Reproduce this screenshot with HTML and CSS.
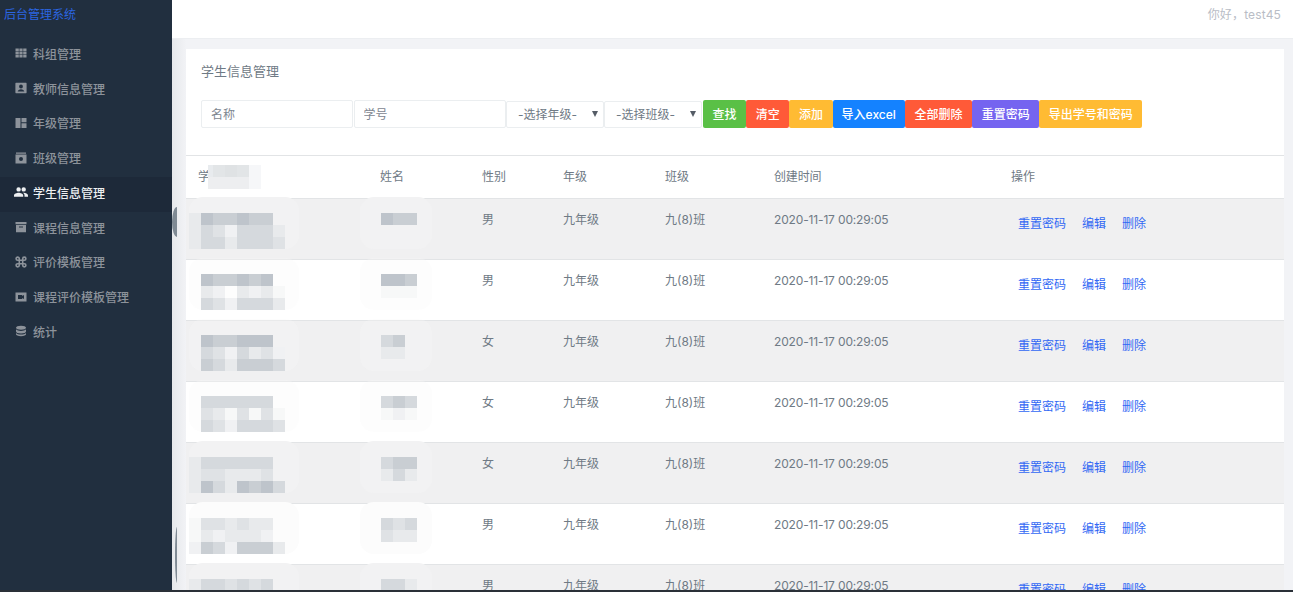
FILE: index.html
```html
<!DOCTYPE html>
<html lang="zh-CN">
<head>
<meta charset="utf-8">
<title>学生信息管理</title>
<link rel="stylesheet" href="styles.css">
</head>
<body>
<div class="app">
  <aside class="side">
    <div class="logo">后台管理系统</div>
    <nav class="nav">
      <a class="item"><svg viewBox="0 0 12 12"><path d="M.5 1.500h3.300v2.700H.5zM4.400 1.500h3.200v2.700H4.400zM8.200 1.500h3.300v2.700H8.200zM.5 4.700h3.300v2.600H.5zM4.400 4.700h3.200v2.600H4.400zM8.200 4.700h3.300v2.600H8.200zM.5 7.800h3.300v2.700H.5zM4.400 7.800h3.200v2.700H4.400zM8.200 7.800h3.300v2.700H8.200z"/></svg>科组管理</a>
      <a class="item"><svg viewBox="0 0 12 12"><path fill-rule="evenodd" d="M1 .8h10a.6.6 0 0 1 .6.6v9.2a.6.6 0 0 1-.6.6H1a.6.6 0 0 1-.6-.6V1.400a.6.6 0 0 1 .6-.6zM6 2.600a1.900 1.900 0 1 0 0 3.800 1.900 1.900 0 0 0 0-3.800zM2.700 9.600h6.600c0-1.500-1.800-2.400-3.300-2.400s-3.300.9-3.300 2.400z"/></svg>教师信息管理</a>
      <a class="item"><svg viewBox="0 0 12 12"><path d="M.5 1h5v10h-5zM6.500 1h5v4.200h-5zM6.500 6.200h5V11h-5z"/></svg>年级管理</a>
      <a class="item"><svg viewBox="0 0 12 12"><path fill-rule="evenodd" d="M1 .5h10v1.200H1zM.5 2.500h11v9H.5zM6 5a2 2 0 1 0 0 4 2 2 0 0 0 0-4z"/></svg>班级管理</a>
      <a class="item active"><svg viewBox="0 0 14 12"><path d="M4.600 5.600a2.200 2.200 0 1 0 0-4.400 2.200 2.200 0 0 0 0 4.400zM9.700 5.600a2.200 2.200 0 1 0 0-4.400 2.200 2.200 0 0 0 0 4.400zM4.600 6.800C2.800 6.800 0 7.700 0 9.400v1.300h9.200V9.400c0-1.700-2.800-2.600-4.600-2.600zM9.700 6.800h-.8c1 .7 1.600 1.500 1.600 2.600v1.300H14V9.400c0-1.700-2.500-2.600-4.300-2.600z"/></svg>学生信息管理</a>
      <a class="item"><svg viewBox="0 0 12 12"><path d="M.5 1h11v2.200H.5zM1 4h10v7.300H1zM4 5.500v1h4v-1z" fill-rule="evenodd"/></svg>课程信息管理</a>
      <a class="item"><svg viewBox="0 0 12 12"><path fill="none" stroke="currentColor" stroke-width="1.600" d="M4.300 4.300h3.400v3.400H4.300zM4.300 4.300H2.700a1.600 1.600 0 1 1 1.600-1.600zM7.700 4.300V2.700a1.600 1.600 0 1 1 1.600 1.600zM7.700 7.700h1.600a1.600 1.600 0 1 1-1.600 1.600zM4.300 7.700v1.600a1.600 1.600 0 1 1-1.600-1.600z"/></svg>评价模板管理</a>
      <a class="item"><svg viewBox="0 0 12 12"><path fill-rule="evenodd" d="M.5 1.500h11v9H.5zM3 4v4h4.200V6.900L9 8V4L7.200 5.100V4z"/></svg>课程评价模板管理</a>
      <a class="item"><svg viewBox="0 0 12 12"><path d="M6 .8c3 0 5 .9 5 2s-2 2-5 2-5-.9-5-2 2-2 5-2zM1 4.300c.9 1 3 1.600 5 1.600s4.100-.6 5-1.600v2.200c0 1.100-2 2-5 2s-5-.9-5-2zM1 8c.9 1 3 1.500 5 1.500S10.100 9 11 8v1.300c0 1.100-2 1.900-5 1.900s-5-.8-5-1.900z"/></svg>统计</a>
    </nav>
  </aside>
  <div class="main">
    <header class="top">你好，test45</header>
    <section class="panel">
      <h1 class="title">学生信息管理</h1>
      <div class="bar">
        <input class="field" placeholder="名称">
        <input class="field" placeholder="学号">
        <div class="sel">-选择年级-</div>
        <div class="sel">-选择班级-</div>
        <button class="btn green">查找</button>
        <button class="btn red">清空</button>
        <button class="btn amber">添加</button>
        <button class="btn blue">导入excel</button>
        <button class="btn red">全部删除</button>
        <button class="btn violet">重置密码</button>
        <button class="btn amber">导出学号和密码</button>
      </div>
      <div class="table">
        <div class="row head">
          <div class="c1">学<span class="headblob"><i class="h1"></i><i class="h2"></i><i class="h3"></i><i class="h2"></i><i class="h5"></i><i class="h4"></i><i class="h4"></i><i class="h4"></i><i class="h4"></i><i class="h5"></i></span></div><div class="c2">姓名</div><div class="c3">性别</div><div class="c4">年级</div><div class="c5">班级</div><div class="c6">创建时间</div><div class="c7">操作</div>
        </div>

        <div class="row alt clean">
          <div class="c1"><div class="mosaic"><i class="g5"></i><i class="g1"></i><i class="g2"></i><i class="g2"></i><i class="g1"></i><i class="g2"></i><i class="g2"></i><i class="g0"></i><i class="g5"></i><i class="g3"></i><i class="g4"></i><i class="g6"></i><i class="g3"></i><i class="g3"></i><i class="g3"></i><i class="g5"></i><i class="g5"></i><i class="g3"></i><i class="g3"></i><i class="g5"></i><i class="g3"></i><i class="g3"></i><i class="g3"></i><i class="g4"></i></div></div>
          <div class="c2"><div class="mosaic short"><i class="g1"></i><i class="g2"></i><i class="g2"></i><i class="g0"></i><i class="g0"></i><i class="g0"></i></div></div>
          <div class="c3">男</div><div class="c4">九年级</div><div class="c5">九(8)班</div><div class="c6">2020-11-17 00:29:05</div>
          <div class="c7"><a>重置密码</a><a>编辑</a><a>删除</a></div>
        </div>

        <div class="row">
          <div class="c1"><div class="mosaic"><i class="g0"></i><i class="g1"></i><i class="g2"></i><i class="g2"></i><i class="g1"></i><i class="g2"></i><i class="g1"></i><i class="g0"></i><i class="g0"></i><i class="g5"></i><i class="g6"></i><i class="g0"></i><i class="g5"></i><i class="g6"></i><i class="g5"></i><i class="g7"></i><i class="g0"></i><i class="g3"></i><i class="g4"></i><i class="g6"></i><i class="g3"></i><i class="g3"></i><i class="g3"></i><i class="g5"></i></div></div>
          <div class="c2"><div class="mosaic short"><i class="g1"></i><i class="g1"></i><i class="g2"></i><i class="g7"></i><i class="g7"></i><i class="g7"></i></div></div>
          <div class="c3">男</div><div class="c4">九年级</div><div class="c5">九(8)班</div><div class="c6">2020-11-17 00:29:05</div>
          <div class="c7"><a>重置密码</a><a>编辑</a><a>删除</a></div>
        </div>

        <div class="row alt">
          <div class="c1"><div class="mosaic"><i class="g0"></i><i class="g1"></i><i class="g2"></i><i class="g2"></i><i class="g1"></i><i class="g1"></i><i class="g1"></i><i class="g0"></i><i class="g0"></i><i class="g3"></i><i class="g4"></i><i class="g6"></i><i class="g3"></i><i class="g5"></i><i class="g4"></i><i class="g6"></i><i class="g0"></i><i class="g2"></i><i class="g3"></i><i class="g5"></i><i class="g2"></i><i class="g2"></i><i class="g2"></i><i class="g3"></i></div></div>
          <div class="c2"><div class="mosaic short"><i class="g3"></i><i class="g2"></i><i class="g0"></i><i class="g5"></i><i class="g5"></i><i class="g0"></i></div></div>
          <div class="c3">女</div><div class="c4">九年级</div><div class="c5">九(8)班</div><div class="c6">2020-11-17 00:29:05</div>
          <div class="c7"><a>重置密码</a><a>编辑</a><a>删除</a></div>
        </div>

        <div class="row">
          <div class="c1"><div class="mosaic"><i class="g0"></i><i class="g3"></i><i class="g3"></i><i class="g3"></i><i class="g3"></i><i class="g3"></i><i class="g3"></i><i class="g0"></i><i class="g0"></i><i class="g4"></i><i class="g5"></i><i class="g7"></i><i class="g4"></i><i class="g7"></i><i class="g4"></i><i class="g7"></i><i class="g0"></i><i class="g3"></i><i class="g4"></i><i class="g6"></i><i class="g3"></i><i class="g3"></i><i class="g3"></i><i class="g4"></i></div></div>
          <div class="c2"><div class="mosaic short"><i class="g3"></i><i class="g2"></i><i class="g3"></i><i class="g7"></i><i class="g6"></i><i class="g7"></i></div></div>
          <div class="c3">女</div><div class="c4">九年级</div><div class="c5">九(8)班</div><div class="c6">2020-11-17 00:29:05</div>
          <div class="c7"><a>重置密码</a><a>编辑</a><a>删除</a></div>
        </div>

        <div class="row alt clean">
          <div class="c1"><div class="mosaic"><i class="g5"></i><i class="g3"></i><i class="g3"></i><i class="g3"></i><i class="g3"></i><i class="g3"></i><i class="g3"></i><i class="g0"></i><i class="g5"></i><i class="g4"></i><i class="g4"></i><i class="g5"></i><i class="g5"></i><i class="g5"></i><i class="g4"></i><i class="g0"></i><i class="g5"></i><i class="g1"></i><i class="g3"></i><i class="g5"></i><i class="g1"></i><i class="g2"></i><i class="g1"></i><i class="g3"></i></div></div>
          <div class="c2"><div class="mosaic short"><i class="g3"></i><i class="g2"></i><i class="g2"></i><i class="g5"></i><i class="g3"></i><i class="g5"></i></div></div>
          <div class="c3">女</div><div class="c4">九年级</div><div class="c5">九(8)班</div><div class="c6">2020-11-17 00:29:05</div>
          <div class="c7"><a>重置密码</a><a>编辑</a><a>删除</a></div>
        </div>

        <div class="row clean">
          <div class="c1"><div class="mosaic"><i class="g7"></i><i class="g4"></i><i class="g4"></i><i class="g5"></i><i class="g4"></i><i class="g5"></i><i class="g5"></i><i class="g0"></i><i class="g7"></i><i class="g5"></i><i class="g6"></i><i class="g5"></i><i class="g5"></i><i class="g5"></i><i class="g6"></i><i class="g0"></i><i class="g6"></i><i class="g2"></i><i class="g3"></i><i class="g6"></i><i class="g2"></i><i class="g2"></i><i class="g2"></i><i class="g5"></i></div></div>
          <div class="c2"><div class="mosaic short"><i class="g3"></i><i class="g4"></i><i class="g3"></i><i class="g4"></i><i class="g5"></i><i class="g5"></i></div></div>
          <div class="c3">男</div><div class="c4">九年级</div><div class="c5">九(8)班</div><div class="c6">2020-11-17 00:29:05</div>
          <div class="c7"><a>重置密码</a><a>编辑</a><a>删除</a></div>
        </div>

        <div class="row alt clean">
          <div class="c1"><div class="mosaic"><i class="g5"></i><i class="g3"></i><i class="g3"></i><i class="g4"></i><i class="g3"></i><i class="g4"></i><i class="g3"></i><i class="g0"></i><i class="g6"></i><i class="g5"></i><i class="g6"></i><i class="g5"></i><i class="g5"></i><i class="g5"></i><i class="g6"></i><i class="g7"></i></div></div>
          <div class="c2"><div class="mosaic short"><i class="g3"></i><i class="g3"></i><i class="g5"></i><i class="g6"></i><i class="g6"></i><i class="g6"></i></div></div>
          <div class="c3">男</div><div class="c4">九年级</div><div class="c5">九(8)班</div><div class="c6">2020-11-17 00:29:05</div>
          <div class="c7"><a>重置密码</a><a>编辑</a><a>删除</a></div>
        </div>
      </div>
    </section>
  </div>
  <span class="arc arc-a"></span>
  <span class="arc arc-b"></span>
</div>
</body>
</html>
```
FILE: styles.css
```css
* { box-sizing: border-box; }
html, body { margin: 0; height: 100%; overflow: hidden; }
body {
  font-family: Inter, "Noto Sans CJK SC", sans-serif;
  font-size: 12px;
  color: #6f7a85;
  background: #f0f2f5;
  border-bottom: 2px solid #2a3038;
}
.app { position: relative; display: flex; height: 590px; overflow: hidden; }

.side { flex: 0 0 172px; background: #212f3f; color: #8b929a; }
.logo { height: 30px; line-height: 29px; padding-left: 4px; color: #2b66e2; font-size: 12px; }
.nav { padding-top: 8px; }
.item { display: flex; align-items: center; height: 34.75px; padding: 0 0 4px 15px; gap: 6px; color: #8d939b; font-size: 12px; font-weight: 500; }
.item svg { width: 12px; height: 12px; fill: currentColor; flex: none; }
.item.active { background: #1d2939; color: #eef0f2; }
.item.active svg { width: 14px; margin-left: -1px; margin-right: -1px; }

.main { flex: 1; min-width: 0; display: flex; flex-direction: column; background: linear-gradient(90deg, #e6e8eb, #f2f3f6 14px); }
.top { height: 39px; flex: none; background: #fff; border-bottom: 1px solid #eceef1; padding: 7px 12px 0 0; text-align: right; color: #b9bdc6; font-size: 12px; line-height: 16px; letter-spacing: .15px; }
.panel { margin: 10px 9px 0 14px; flex: 1; background: #fff; overflow: hidden; }
.title { margin: 0; padding: 13px 0 0 15px; font-size: 13px; line-height: 18px; font-weight: 400; color: #6f7a85; }

.bar { display: flex; align-items: flex-start; padding: 20px 0 0 15px; height: 75px; }
.field { width: 152px; height: 28px; margin-right: .5px; padding: 0 9px; border: 1px solid #ebeef0; border-radius: 2px; font: inherit; color: #6f7a85; background: #fff; outline: 0; }
.field::placeholder { color: #7d8690; opacity: 1; }
.sel { position: relative; width: 98px; height: 27px; line-height: 25px; margin-top: 1px; padding-left: 11px; border: 1px solid #ebeef0; border-radius: 2px; color: #6f7a85; }
.sel::after { content: ""; position: absolute; right: 5px; top: 9px; border: 3.5px solid transparent; border-top: 6px solid #555c66; border-bottom: 0; }
.sel + .sel { margin-right: 1px; }
.btn { height: 28px; padding: 0 9.600px 2px; border: 0; border-radius: 2px; color: #fff; font: inherit; font-weight: 500; white-space: nowrap; }
.green { background: #5ac046; }
.red { background: #ff5a38; }
.amber { background: #ffbb33; }
.blue { background: #1482ff; padding: 0 9px 2px; }
.violet { background: #7564f0; }

.table { border-top: 1px solid #e2e4e6; }
.row { display: flex; height: 61px; padding-top: 12px; border-bottom: 1px solid #e2e4e6; line-height: 17px; position: relative; }
.row.head { height: 43px; background: #fff; }
.row.alt { background: #f0f0f1; }
.c1 { width: 194px; padding-left: 12px; position: relative; }
.c2 { width: 102px; position: relative; }
.c3 { width: 81px; }
.c4 { width: 102px; }
.c5 { width: 109px; }
.c6 { width: 237px; letter-spacing: -.15px; }
.row:not(.head) .c7 { padding: 4px 0 0 7px; display: flex; gap: 16px; color: #3268f4; }

.row:not(.head) .c1::before,
.row:not(.head) .c2::before { content: ""; position: absolute; top: -14px; height: 52px; background: rgba(250, 250, 250, .3); border-radius: 14px; }
.row:not(.head) .c1::before { left: 3px; width: 110px; }
.row:not(.head) .c2::before { left: -20px; width: 72px; }
.row.clean .c1::before, .row.clean .c2::before { background: #fcfcfc; }
.row.alt.clean .c1::before, .row.alt.clean .c2::before { background: #f2f2f3; }

.mosaic { position: relative; display: grid; grid-template-columns: repeat(8, 12px); grid-auto-rows: 12px; margin: 2px 0 0 -9px; }
.mosaic.short { grid-template-columns: repeat(3, 12px); margin-left: 1px; }
.mosaic i { display: block; }
.headblob { display: grid; grid-template-columns: 5px repeat(4, 12px); grid-auto-rows: 12px; position: absolute; left: 22px; top: -3px; }
.h1 { background: #e8ebee; }
.h2 { background: #e2e5e7; }
.h3 { background: #dfe2e4; }
.h4 { background: #edeef0; }
.h5 { background: #f6f7f9; }
.g0 { background: transparent; }
.g1 { background: #bec4cb; }
.g2 { background: #c9ced3; }
.g3 { background: #d5d9dd; }
.g4 { background: #dfe2e5; }
.g5 { background: #e8eaec; }
.g6 { background: #f0f1f3; }
.g7 { background: #f7f8f8; }

.arc { position: absolute; border-radius: 50%; background: #7f8a94; }
.arc-a { left: 172px; top: 207px; width: 10px; height: 30px; clip-path: inset(0 5px 0 0); }
.arc-b { left: 175px; top: 527px; width: 4px; height: 56px; clip-path: inset(0 2px 0 0); }
```
